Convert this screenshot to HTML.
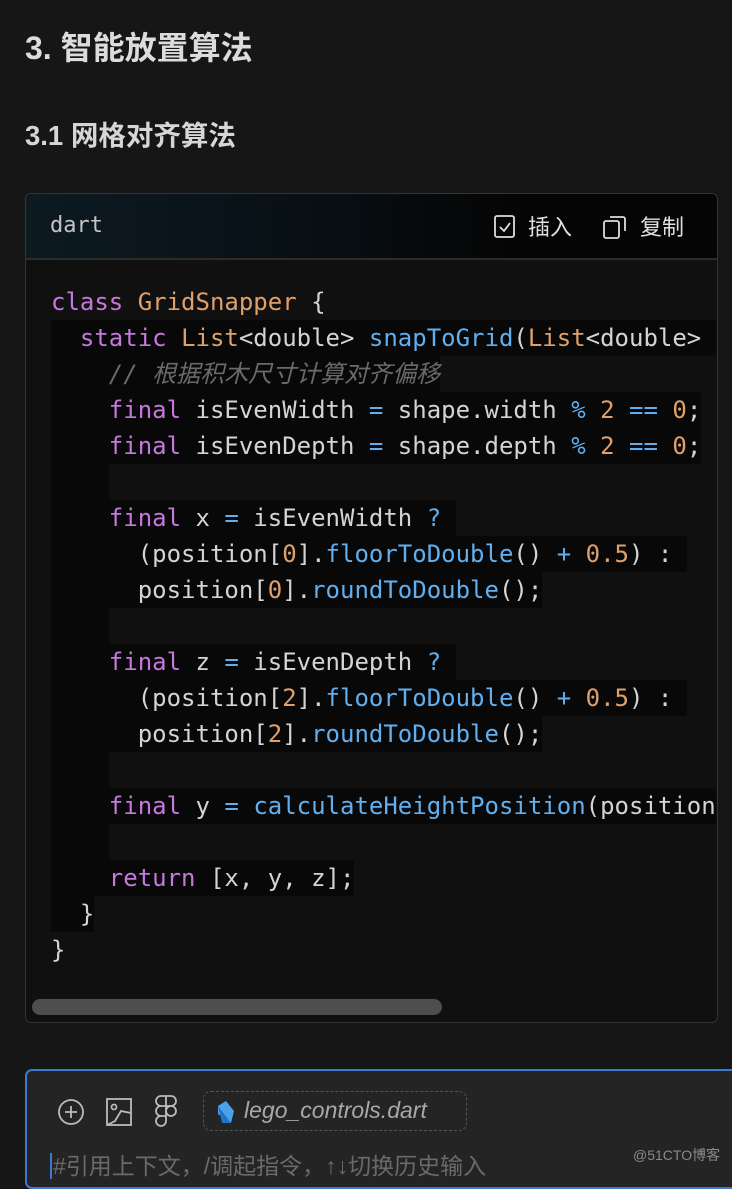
<!DOCTYPE html>
<html><head><meta charset="utf-8"><style>
*{margin:0;padding:0;box-sizing:border-box}
body{width:732px;height:1173px;background:#161616;overflow:hidden;position:relative;font-family:"Liberation Sans","Noto Sans CJK SC",sans-serif;color:#d6d6d6}
h1{position:absolute;left:25px;top:26px;font-size:32px;font-weight:bold;line-height:44px;color:#dcdcdc}
h2{position:absolute;left:25px;top:117px;font-size:27.5px;font-weight:bold;line-height:38px;color:#d6d6d6}
.blk{position:absolute;left:25px;top:193px;width:693px;height:830px;border:1px solid #343434;border-radius:6px;background:#101010;overflow:hidden}
.hd{height:66px;border-bottom:2px solid #2c2c2c;background:linear-gradient(90deg,#0d1a22 0%,#081015 40%,#050505 70%);position:relative}
.hd .l{position:absolute;left:24px;top:18px;font-family:"DejaVu Sans Mono","Liberation Mono",monospace;font-size:22px;line-height:28px;color:#c4c4c4}
.hd .r{position:absolute;top:16px;font-size:22px;color:#e0e0e0;font-family:"Liberation Sans","Noto Sans CJK SC",sans-serif}
pre{position:absolute;left:25px;top:90px;font-family:"DejaVu Sans Mono","Liberation Mono",monospace;font-size:24px;line-height:36px;color:#d4d4d4}
.ln{display:inline-block;background:#080808;height:36px;vertical-align:top}
.k{color:#c678dd}.t{color:#e0a06a}.f{color:#61afef}.n{color:#e0a06a}.o{color:#61afef}.c{color:#6a6a6a;font-style:italic}
.sb{position:absolute;left:6px;top:805px;width:410px;height:16px;border-radius:8px;background:#4e4e4e}
.in{position:absolute;left:25px;top:1069px;width:720px;height:120px;border:2px solid #3c7ad0;border-radius:7px;background:#242424}
.chip{position:absolute;left:176px;top:20px;width:264px;height:40px;border:1.5px dashed #555;border-radius:8px}
.chip span{position:absolute;left:40px;top:5px;font-size:23px;font-style:italic;color:#a8a8a8}
.ph{position:absolute;left:50px;top:1147px;font-size:23px;color:#6a6a6a}
.wm{position:absolute;left:633px;top:1145px;font-size:14px;color:#8a8a8a}
</style></head><body>
<h1>3. 智能放置算法</h1>
<h2>3.1 网格对齐算法</h2>
<div class="blk">
 <div class="hd">
  <div class="l">dart</div>
  <svg style="position:absolute;left:468px;top:21px" width="22" height="24" viewBox="0 0 22 24" fill="none" stroke="#ddd" stroke-width="1.8"><rect x="1" y="1" width="19" height="21" rx="2"/><path d="M6 12l4 4 6-8"/></svg>
  <div class="r" style="left:502px">插入</div>
  <svg style="position:absolute;left:577px;top:21px" width="24" height="24" viewBox="0 0 24 24" fill="none" stroke="#ddd" stroke-width="1.8"><rect x="1" y="6" width="15" height="17" rx="2"/><path d="M7 2h13a2 2 0 0 1 2 2v12"/></svg>
  <div class="r" style="left:614px">复制</div>
 </div>
<pre><span class="k">class</span> <span class="t">GridSnapper</span> {
<span class="ln">  <span class="k">static</span> <span class="t">List</span>&lt;double&gt; <span class="f">snapToGrid</span>(<span class="t">List</span>&lt;double&gt; </span>
<span class="ln">    <span class="c">// 根据积木尺寸计算对齐偏移</span></span>
<span class="ln">    <span class="k">final</span> isEvenWidth <span class="o">=</span> shape.width <span class="o">%</span> <span class="n">2</span> <span class="o">==</span> <span class="n">0</span>;</span>
<span class="ln">    <span class="k">final</span> isEvenDepth <span class="o">=</span> shape.depth <span class="o">%</span> <span class="n">2</span> <span class="o">==</span> <span class="n">0</span>;</span>
<span class="ln">    </span>
<span class="ln">    <span class="k">final</span> x <span class="o">=</span> isEvenWidth <span class="o">?</span> </span>
<span class="ln">      (position[<span class="n">0</span>].<span class="f">floorToDouble</span>() <span class="o">+</span> <span class="n">0.5</span>) : </span>
<span class="ln">      position[<span class="n">0</span>].<span class="f">roundToDouble</span>();</span>
<span class="ln">    </span>
<span class="ln">    <span class="k">final</span> z <span class="o">=</span> isEvenDepth <span class="o">?</span> </span>
<span class="ln">      (position[<span class="n">2</span>].<span class="f">floorToDouble</span>() <span class="o">+</span> <span class="n">0.5</span>) : </span>
<span class="ln">      position[<span class="n">2</span>].<span class="f">roundToDouble</span>();</span>
<span class="ln">    </span>
<span class="ln">    <span class="k">final</span> y <span class="o">=</span> <span class="f">calculateHeightPosition</span>(position</span>
<span class="ln">    </span>
<span class="ln">    <span class="k">return</span> [x, y, z];</span>
<span class="ln">  }</span>
}</pre>
 <div class="sb"></div>
</div>
<div class="in">
 <svg style="position:absolute;left:30px;top:27px" width="28" height="28" viewBox="0 0 28 28" fill="none" stroke="#bbb" stroke-width="1.8"><circle cx="14" cy="14" r="12"/><path d="M14 8v12M8 14h12"/></svg>
 <svg style="position:absolute;left:79px;top:27px" width="26" height="28" viewBox="0 0 26 28" fill="none" stroke="#bbb" stroke-width="1.8"><rect x="1" y="1" width="24" height="26"/><circle cx="8" cy="9" r="2.5"/><path d="M1 27l8-4 6-10 10 2"/></svg>
 <svg style="position:absolute;left:128px;top:24px" width="22" height="32" viewBox="0 0 22 32" fill="none" stroke="#bbb" stroke-width="1.8"><path d="M11 1H6a5 5 0 0 0 0 10h5V1zM11 1h5a5 5 0 0 1 0 10h-5M11 11H6a5 5 0 0 0 0 10h5zM11 21H6a5 5 0 1 0 5 5z"/><circle cx="16" cy="16" r="5"/></svg>
 <div class="chip"><svg style="position:absolute;left:10px;top:8px" width="22" height="24" viewBox="0 0 22 24"><path d="M4 6L12 1l8 10-3 12-13-9z" fill="#4aa3e8"/><path d="M4 6l13 17H8z" fill="#1e73c7"/></svg><span>lego_controls.dart</span></div>
</div>
<div class="ph"><span style="border-left:2px solid #3c7ad0;padding-left:1px">#引用上下文，/调起指令，↑↓切换历史输入</span></div>
<div class="wm">@51CTO博客</div>
</body></html>
